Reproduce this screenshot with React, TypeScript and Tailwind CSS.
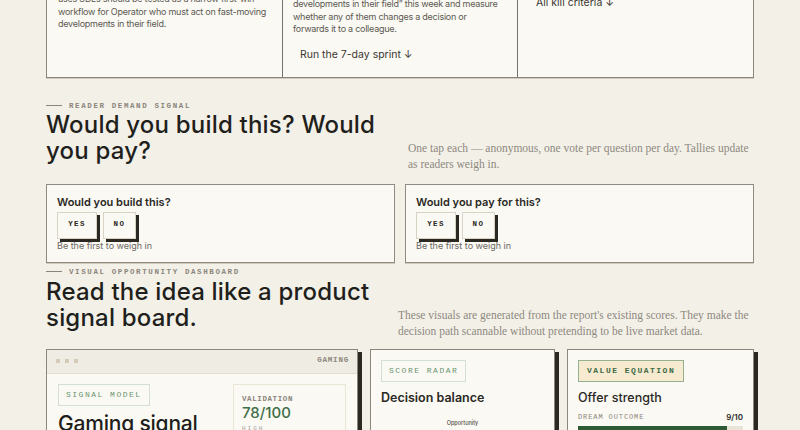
import type { ReactNode } from 'react';

const sans = "font-[family-name:'Inter',sans-serif]";
const mono = "font-[family-name:'Liberation_Mono',monospace]";
const serif = "font-[family-name:'Liberation_Serif',serif]";

function Eyebrow({ children }: { children: ReactNode }) {
  return (
    <div className="flex h-3 items-center gap-[7px]">
      <span className="h-px w-4 bg-[#8a857b]" />
      <span className={`${mono} text-[7.5px] font-bold uppercase leading-3 tracking-[1.6px] text-[#8a857b]`}>
        {children}
      </span>
    </div>
  );
}

function SectionHead({ eyebrow, title, note, noteWidth, gap = 'mt-0' }: { eyebrow: string; title: string; note: string; noteWidth: string; gap?: string }) {
  return (
    <div className="flex items-end justify-between">
      <div className="pb-2">
        <Eyebrow>{eyebrow}</Eyebrow>
        <h2 className={`${gap} w-[340px] text-[24px] font-medium leading-[26px] tracking-[0.2px] text-[#211f1b]`}>{title}</h2>
      </div>
      <p className={`${serif} ${noteWidth} text-[11.5px] leading-4 text-[#8e897f]`}>{note}</p>
    </div>
  );
}

function VoteButton({ label, width }: { label: string; width: string }) {
  return (
    <button
      type="button"
      className={`${mono} ${width} h-[27px] border border-[#d9d3c5] bg-[#faf9f4] text-[7.5px] font-bold tracking-[1.4px] text-[#2a2824] shadow-[3px_3px_0_#2b2822]`}
    >
      {label}
    </button>
  );
}

function VoteCard({ question }: { question: string }) {
  return (
    <div className="border border-[#8f8b83] bg-[#faf9f4] px-[10px] pb-[10px] pt-[10px] shadow-[0_1px_0_#cfcabe]">
      <h3 className="text-[11px] font-semibold leading-[14px] text-[#2a2824]">{question}</h3>
      <div className="mt-[3px] flex gap-[6px]">
        <VoteButton label="YES" width="w-[40px]" />
        <VoteButton label="NO" width="w-[33px]" />
      </div>
      <p className="mt-px text-[9px] leading-3 text-[#6b675f]">Be the first to weigh in</p>
    </div>
  );
}

function Badge({ children, tone = 'plain' }: { children: ReactNode; tone?: 'plain' | 'warm' }) {
  return (
    <span
      className={
        tone === 'warm'
          ? `${mono} flex h-[22px] w-fit items-center border border-[#93b090] bg-[#f6ead1] px-[8px] text-[8px] font-bold tracking-[1.5px] text-[#3f6b45]`
          : `${mono} flex h-[22px] w-fit items-center border border-[#d3dfd0] px-[7px] text-[8px] tracking-[1.5px] text-[#6a9470]`
      }
    >
      {children}
    </span>
  );
}

const stripText = 'mt-2 whitespace-nowrap text-[9px] leading-[12.5px] tracking-[-0.25px] text-[#5d5952]';

export default function App() {
  return (
    <div className={`${sans} min-h-screen overflow-hidden bg-[#f3f0e8] px-[46px]`}>
      {/* wedge / sprint / kill criteria strip, scrolled partly out of view */}
      <div className="-mt-[90px] grid grid-cols-[236px_235px_1fr] border border-[#8a867e] bg-[#faf9f4] shadow-[0_1px_0_#cfcabe]">
        <div className="border-r border-[#77736b] px-[11px] pb-[15px] pt-[13px]">
          <div className={`${mono} text-[7.5px] font-bold leading-3 tracking-[1.4px] text-[#8a857b]`}>BEST WEDGE</div>
          <div className="mt-2 text-[13px] font-semibold leading-4 text-[#2a2824]">Start narrow</div>
          <p className={stripText}>
            The strongest evidence in the report says
            <br />
            a first version of a tool that reads and
            <br />
            uses SDLs should be tested as a narrow first-win
            <br />
            workflow for Operator who must act on fast-moving
            <br />
            developments in their field.
          </p>
        </div>
        <div className="border-r border-[#77736b] px-[10px] pb-[15px] pt-[13px]">
          <div className={`${mono} text-[7.5px] font-bold leading-3 tracking-[1.4px] text-[#8a857b]`}>NEXT STEP</div>
          <div className="mt-2 text-[13px] font-semibold leading-4 text-[#2a2824]">Seven-day sprint</div>
          <p className={`${stripText} !mt-[13px]`}>
            Send ten operators a short brief titled
            <br />
            &ldquo;Three things that moved in fast-moving
            <br />
            developments in their field&rdquo; this week and measure
            <br />
            whether any of them changes a decision or
            <br />
            forwards it to a colleague.
          </p>
          <div className="mt-3 px-[7px] text-[10.5px] leading-[14px] text-[#3a3732]">Run the 7-day sprint ↓</div>
        </div>
        <div className="px-[11px] pt-[13px]">
          <div className={`${mono} text-[7.5px] font-bold leading-3 tracking-[1.4px] text-[#8a857b]`}>KILL CRITERIA</div>
          <div className="mt-2 text-[13px] font-semibold leading-4 text-[#2a2824]">When to stop</div>
          <p className={stripText}>
            No reader acts on a brief, or no one
            <br />
            asks for the next issue within a week.
          </p>
          <div className="mt-[3px] px-[7px] text-[10.5px] leading-[14px] text-[#3a3732]">All kill criteria ↓</div>
        </div>
      </div>

      {/* reader demand */}
      <div className="mt-[22px]">
        <SectionHead
          eyebrow="Reader demand signal"
          title="Would you build this? Would you pay?"
          note="One tap each — anonymous, one vote per question per day. Tallies update as readers weigh in."
          noteWidth="w-[346px]"
        />
        <div className="mt-3 grid grid-cols-2 gap-[10px]">
          <VoteCard question="Would you build this?" />
          <VoteCard question="Would you pay for this?" />
        </div>
      </div>

      {/* dashboard */}
      <div className="mt-[3px]">
        <SectionHead
          eyebrow="Visual opportunity dashboard"
          title="Read the idea like a product signal board."
          note="These visuals are generated from the report's existing scores. They make the decision path scannable without pretending to be live market data."
          noteWidth="w-[356px]"
          gap="mt-[1px]"
        />
        <div className="mt-[10px] grid grid-cols-[312px_185px_1fr] gap-3">
          <div className="border border-[#8b877f] bg-[#faf9f4] shadow-[4px_3px_0_#2b2822]">
            <div className="flex h-6 items-center justify-between border-b border-[#e3ded2] bg-[#efece3] pl-[9px] pr-2">
              <div className="flex gap-[5px]">
                <span className="size-1 bg-[#d3cbb5]" />
                <span className="size-1 bg-[#d3cbb5]" />
                <span className="size-1 bg-[#d3cbb5]" />
              </div>
              <span className={`${mono} text-[7.5px] font-bold tracking-[0.8px] text-[#8b877f]`}>GAMING</span>
            </div>
            <div className="flex justify-between px-[11px] pt-[10px]">
              <div>
                <Badge>SIGNAL MODEL</Badge>
                <h3 className="mt-[5px] text-[21px] font-medium leading-[26px] tracking-[-0.2px] text-[#1f1d1a]">
                  Gaming signal
                  <br />
                  board
                </h3>
              </div>
              <div className="h-[80px] w-[113px] border border-[#ebe5d5] px-2 pt-[9px]">
                <div className={`${mono} text-[7.5px] font-bold leading-[10px] tracking-[0.6px] text-[#8a857b]`}>VALIDATION</div>
                <div className="text-[15px] font-medium leading-[18px] text-[#3f6e47]">78/100</div>
                <div className={`${mono} mt-[2px] text-[6px] tracking-[2px] text-[#a8a397]`}>HIGH</div>
              </div>
            </div>
          </div>

          <div className="border border-[#8b877f] bg-[#faf9f4] px-[10px] pt-[10px] shadow-[4px_3px_0_#2b2822]">
            <Badge>SCORE RADAR</Badge>
            <h3 className="mt-[8px] text-[12.5px] font-semibold leading-4 text-[#2a2824]">Decision balance</h3>
            <div className="mt-[13px] flex flex-col items-center">
              <span className="text-[5.5px] font-medium leading-[8px] text-[#55514a]">Opportunity</span>
              <svg width="120" height="90" viewBox="0 0 120 90" className="mt-[2px]">
                <polygon points="60,4 110,40 92,88 28,88 10,40" fill="none" stroke="#e2dccd" />
                <polygon points="60,22 92,44 80,76 40,76 28,44" fill="none" stroke="#e2dccd" />
                <polygon points="60,10 100,42 82,80 36,82 20,42" fill="#3f6e47" fillOpacity="0.15" stroke="#3f6e47" />
              </svg>
            </div>
          </div>

          <div className="border border-[#8b877f] bg-[#faf9f4] px-[10px] pt-[10px] shadow-[4px_3px_0_#2b2822]">
            <Badge tone="warm">VALUE EQUATION</Badge>
            <h3 className="mt-[8px] text-[12.5px] font-medium leading-4 text-[#2a2824]">Offer strength</h3>
            <div className="mt-[6px] flex items-center justify-between">
              <span className={`${mono} text-[7px] leading-[10px] tracking-[0.9px] text-[#8a857b]`}>DREAM OUTCOME</span>
              <span className="text-[8px] font-semibold leading-[10px] text-[#2a2824]">9/10</span>
            </div>
            <div className="mt-1 h-[5px] bg-[#e9e4d8]">
              <div className="h-full bg-[#2e5b35]" style={{ width: '90%' }} />
            </div>
          </div>
        </div>
      </div>
    </div>
  );
}
